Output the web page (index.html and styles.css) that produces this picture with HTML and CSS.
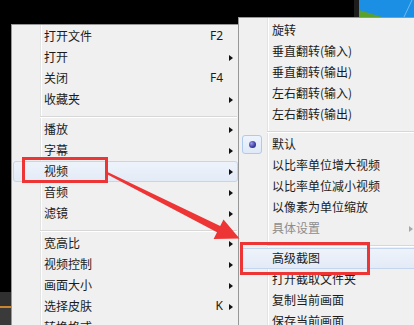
FILE: index.html
```html
<!DOCTYPE html>
<html lang="zh-CN">
<head>
  <meta charset="UTF-8" />
  <title>视频 - 高级截图</title>
  <link rel="stylesheet" href="styles.css">
</head>
<body>
  <div class="desk">

    <!-- Bits of the desktop behind the menus -->
    <svg class="wall" width="60" height="17" viewBox="0 0 60 17">
      <rect x="0" y="0" width="5" height="17" fill="#1d1d1d" />
      <rect x="5" y="0" width="55" height="17" fill="#1b8fe4" />
      <polygon points="5,10 5,17 28,17" fill="#5aa02c" />
      <line x1="58" y1="0" x2="50" y2="17" stroke="#6fb8f0" stroke-width="1" />
    </svg>
    <div class="dock"></div>

    <!-- Main context menu -->
    <div class="menu main">
      <div class="item"><span class="icon"></span><span class="label">打开文件</span><span class="key">F2</span><span class="slot"></span></div>
      <div class="item"><span class="icon"></span><span class="label">打开</span><span class="slot"><i class="tri"></i></span></div>
      <div class="item"><span class="icon"></span><span class="label">关闭</span><span class="key">F4</span><span class="slot"></span></div>
      <div class="item"><span class="icon"></span><span class="label">收藏夹</span><span class="slot"><i class="tri"></i></span></div>
      <div class="sep"></div>
      <div class="item"><span class="icon"></span><span class="label">播放</span><span class="slot"><i class="tri"></i></span></div>
      <div class="item"><span class="icon"></span><span class="label">字幕</span><span class="slot"><i class="tri"></i></span></div>
      <div class="item hot"><span class="icon"></span><span class="label">视频</span><span class="slot"><i class="tri"></i></span></div>
      <div class="item"><span class="icon"></span><span class="label">音频</span><span class="slot"><i class="tri"></i></span></div>
      <div class="item"><span class="icon"></span><span class="label">滤镜</span><span class="slot"><i class="tri"></i></span></div>
      <div class="sep"></div>
      <div class="item"><span class="icon"></span><span class="label">宽高比</span><span class="slot"><i class="tri"></i></span></div>
      <div class="item"><span class="icon"></span><span class="label">视频控制</span><span class="slot"><i class="tri"></i></span></div>
      <div class="item"><span class="icon"></span><span class="label">画面大小</span><span class="slot"><i class="tri"></i></span></div>
      <div class="item"><span class="icon"></span><span class="label">选择皮肤</span><span class="key">K</span><span class="slot"><i class="tri"></i></span></div>
      <div class="item"><span class="icon"></span><span class="label">转换格式</span><span class="slot"><i class="tri"></i></span></div>
    </div>

    <!-- Video submenu -->
    <div class="menu sub">
      <div class="item"><span class="icon"></span><span class="label">旋转</span></div>
      <div class="item"><span class="icon"></span><span class="label">垂直翻转(输入)</span></div>
      <div class="item"><span class="icon"></span><span class="label">垂直翻转(输出)</span></div>
      <div class="item"><span class="icon"></span><span class="label">左右翻转(输入)</span></div>
      <div class="item"><span class="icon"></span><span class="label">左右翻转(输出)</span></div>
      <div class="sep"></div>
      <div class="item"><span class="icon"><span class="radio"><i class="dot"></i></span></span><span class="label">默认</span></div>
      <div class="item"><span class="icon"></span><span class="label">以比率单位增大视频</span></div>
      <div class="item"><span class="icon"></span><span class="label">以比率单位减小视频</span></div>
      <div class="item"><span class="icon"></span><span class="label">以像素为单位缩放</span></div>
      <div class="item off"><span class="icon"></span><span class="label">具体设置</span><span class="slot"><i class="tri"></i></span></div>
      <div class="sep"></div>
      <div class="item hot"><span class="icon"></span><span class="label">高级截图</span></div>
      <div class="item"><span class="icon"></span><span class="label">打开截取文件夹</span></div>
      <div class="item"><span class="icon"></span><span class="label">复制当前画面</span></div>
      <div class="item"><span class="icon"></span><span class="label">保存当前画面</span></div>
    </div>

    <!-- Red annotations drawn over the screenshot -->
    <div class="mark mark-video"></div>
    <div class="mark mark-shot"></div>
    <svg class="pointer" width="414" height="325" viewBox="0 0 414 325">
      <polygon points="107.5,172 220.2,226.1 223.5,219.4 239.5,238.5 213.6,239 217,232.3 106.5,174" fill="#ee3535" />
    </svg>

  </div>
</body>
</html>
```

FILE: styles.css
```css
/* Screen behind the menus */
body {
  margin: 0;
  background: #000;
  font-family: "Noto Sans CJK SC", "Noto Sans", sans-serif;
  font-size: 12px;
  color: #1b1b1b;
}

.desk {
  position: relative;
  width: 414px;
  height: 325px;
  overflow: hidden;
}

.wall {
  position: absolute;
  left: 354px;
  top: 0;
  display: block;
}

/* Taskbar edge peeking out at bottom left */
.dock {
  position: absolute;
  left: 0;
  top: 292px;
  width: 11px;
  height: 33px;
  background: linear-gradient(#303030 14px, #c98430 14px, #c98430 16px, #3a3a3a 16px);
}

/* Windows 7 style context menu */
.menu {
  position: absolute;
  box-sizing: border-box;
  background-color: #f0f0f0;
  border: 1px solid #979797;
  padding: 1px 2px;
}

.main {
  left: 11px;
  top: 24px;
  width: 229px;
  height: 330px;
  background-image: linear-gradient(to right, transparent 28px, #e2e3e3 28px, #e2e3e3 29px, #fff 29px, #fff 30px, transparent 30px);
}

.sub {
  left: 238px;
  top: 17px;
  width: 182px;
  height: 330px;
  padding-top: 2px;
  background-image: linear-gradient(to right, transparent 28px, #e2e3e3 28px, #e2e3e3 29px, #fff 29px, #fff 30px, transparent 30px);
}

.item {
  display: flex;
  align-items: center;
  box-sizing: border-box;
  height: 21px;
  padding-right: 4px;
  white-space: nowrap;
}

.icon {
  flex: 0 0 30px;
  display: flex;
  align-items: center;
}

.sub .icon {
  flex-basis: 31px;
}

.label {
  flex: 1;
  line-height: 21px;
  padding-top: 0;
  margin-top: -2px;
}

.key {
  font-family: "Noto Sans", sans-serif;
  font-size: 12px;
  margin-top: -2px;
}

.slot {
  flex: 0 0 10px;
  display: flex;
  justify-content: flex-end;
  align-items: center;
}

/* Small submenu arrow */
.tri {
  width: 0;
  height: 0;
  border-top: 3.5px solid transparent;
  border-bottom: 3.5px solid transparent;
  border-left: 4px solid #111;
}

.off {
  color: #8d8d8d;
}

.off .tri {
  border-left-color: #a8a8a8;
}

/* Hovered row */
.hot {
  background: linear-gradient(#eef3fa, #e3ebf7);
  border: 1px solid #c3d6ee;
  border-radius: 3px;
  margin: 0 -1px;
}

.sub .hot {
  margin-right: -20px;
}

.sep {
  height: 9px;
  margin-left: 26px;
  background: linear-gradient(transparent 6px, #d7d7d7 6px, #d7d7d7 7px, #fff 7px, #fff 8px, transparent 8px);
}

/* Radio mark for the checked entry */
.radio {
  box-sizing: border-box;
  width: 20px;
  height: 19px;
  margin-left: 1px;
  display: flex;
  align-items: center;
  justify-content: center;
  border: 1px solid #aecbef;
  border-radius: 3px;
  background: linear-gradient(#eef4fc, #dfe9f7);
}

.dot {
  width: 7px;
  height: 7px;
  border-radius: 50%;
  background: radial-gradient(circle at 35% 35%, #9a9ae6, #3a3aa0 60%, #22226a);
}

/* Red annotation boxes */
.mark {
  position: absolute;
  box-sizing: border-box;
  border: 3px solid #ee3535;
}

.mark-video {
  left: 22px;
  top: 157px;
  width: 86px;
  height: 26px;
}

.mark-shot {
  left: 240px;
  top: 242px;
  width: 130px;
  height: 33px;
}

.pointer {
  position: absolute;
  left: 0;
  top: 0;
  pointer-events: none;
}
```
